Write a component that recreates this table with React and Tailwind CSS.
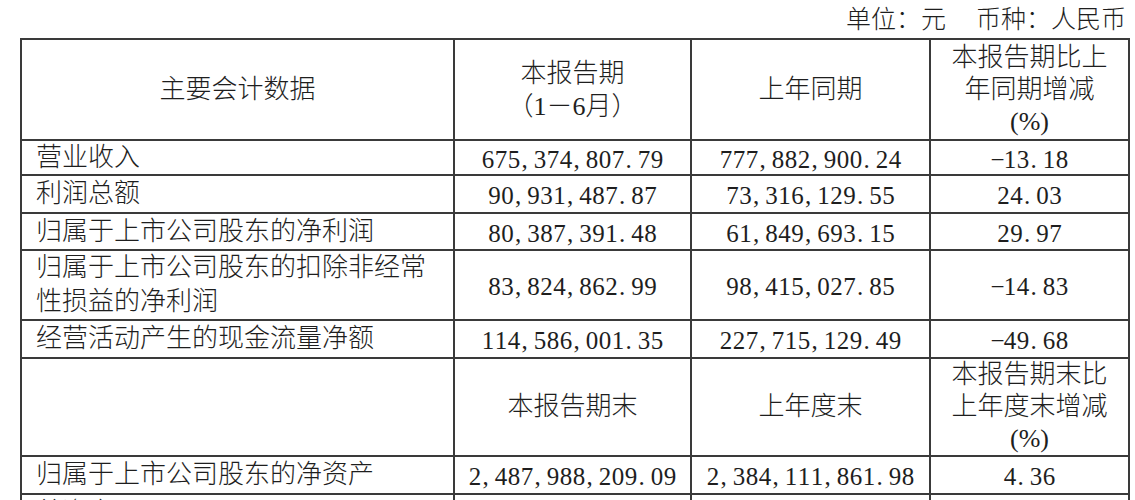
import React from 'react';

const rows = [
  { label: '营业收入', cur: '675,374,807.79', prev: '777,882,900.24', pct: '-13.18', h: 'h-[35px]' },
  { label: '利润总额', cur: '90,931,487.87', prev: '73,316,129.55', pct: '24.03', h: 'h-[38px]' },
  { label: '归属于上市公司股东的净利润', cur: '80,387,391.48', prev: '61,849,693.15', pct: '29.97', h: 'h-[37px]' },
  { label: ['归属于上市公司股东的扣除非经常', '性损益的净利润'], cur: '83,824,862.99', prev: '98,415,027.85', pct: '-14.83', h: 'h-[70px]' },
  { label: '经营活动产生的现金流量净额', cur: '114,586,001.35', prev: '227,715,129.49', pct: '-49.68', h: 'h-[38px]' },
];

// half-width cells like the SimSun digits in the original report
const Num = ({ value }) => (
  <span className="inline-flex text-[25px] leading-none align-middle">
    {value.split('').map((c, i) => (
      <span
        key={i}
        className={`inline-block w-[13px] ${c === ',' || c === '.' ? 'text-left pl-[1px]' : 'text-center'}`}
      >
        {c === '-' ? '−' : c}
      </span>
    ))}
  </span>
);

const cell = 'border-2 border-[#3a3a3a] p-0 align-middle leading-[28px]';

export default function App() {
  return (
    <div className="w-[1135px] h-[500px] overflow-hidden bg-white text-[#1e1e1e] font-['Liberation_Serif','Noto_Sans_CJK_SC',serif] font-light">
      <div className="h-[38px] pr-[9px] flex justify-end items-center text-[25px] leading-none">
        <span>单位：元</span>
        <span className="ml-[30px]">币种：人民币</span>
      </div>
      <table className="ml-[20px] w-[1108px] table-fixed border-collapse text-[26px]">
        <colgroup>
          <col className="w-[433px]" />
          <col className="w-[237px]" />
          <col className="w-[239px]" />
          <col className="w-[199px]" />
        </colgroup>
        <tbody>
          <tr className="h-[101px]">
            <td className={`${cell} text-center`}>主要会计数据</td>
            <td className={`${cell} text-center !leading-[33px]`}>
              本报告期
              <br />
              （1－6月）
            </td>
            <td className={`${cell} text-center`}>上年同期</td>
            <td className={`${cell} text-center !leading-[32px]`}>
              本报告期比上
              <br />
              年同期增减
              <br />
              (%)
            </td>
          </tr>
          {rows.map((r, i) => (
            <tr key={i} className={r.h}>
              <td className={`${cell} pl-[14px] ${Array.isArray(r.label) ? '!leading-[34px]' : ''}`}>
                {Array.isArray(r.label) ? (
                  <>
                    {r.label[0]}
                    <br />
                    {r.label[1]}
                  </>
                ) : (
                  r.label
                )}
              </td>
              <td className={`${cell} text-center`}>
                <Num value={r.cur} />
              </td>
              <td className={`${cell} text-center`}>
                <Num value={r.prev} />
              </td>
              <td className={`${cell} text-center`}>
                <Num value={r.pct} />
              </td>
            </tr>
          ))}
          <tr className="h-[98px]">
            <td className={cell}></td>
            <td className={`${cell} text-center`}>本报告期末</td>
            <td className={`${cell} text-center`}>上年度末</td>
            <td className={`${cell} text-center !leading-[32px]`}>
              本报告期末比
              <br />
              上年度末增减
              <br />
              (%)
            </td>
          </tr>
          <tr className="h-[38px]">
            <td className={`${cell} pl-[14px]`}>归属于上市公司股东的净资产</td>
            <td className={`${cell} text-center`}>
              <Num value="2,487,988,209.09" />
            </td>
            <td className={`${cell} text-center`}>
              <Num value="2,384,111,861.98" />
            </td>
            <td className={`${cell} text-center`}>
              <Num value="4.36" />
            </td>
          </tr>
          <tr className="h-[38px]">
            <td className={`${cell} pl-[14px]`}>总资产</td>
            <td className={cell}></td>
            <td className={cell}></td>
            <td className={cell}></td>
          </tr>
        </tbody>
      </table>
    </div>
  );
}
